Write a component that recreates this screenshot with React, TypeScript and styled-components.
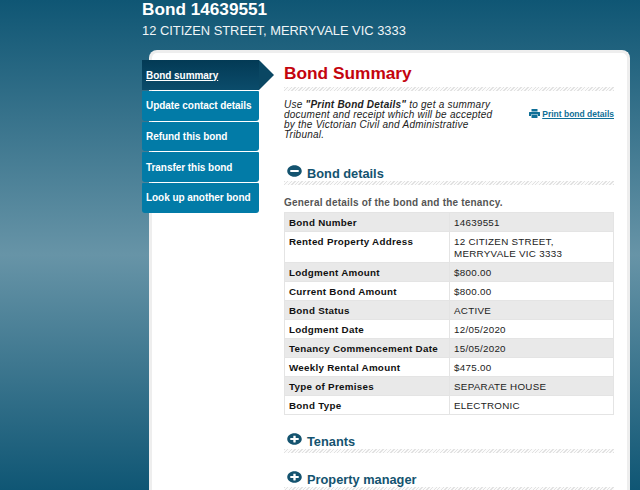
import styled, { createGlobalStyle } from 'styled-components'
import { FaMinusCircle, FaPlusCircle } from 'react-icons/fa'

const GlobalStyle = createGlobalStyle`
  html, body {
    margin: 0;
    height: 490px;
    overflow: hidden;
  }
  body {
    background: linear-gradient(#0f5674 0, #6794a7 255px, #0f5674 490px);
    font-family: "Liberation Sans", Arial, sans-serif;
  }
`

const Page = styled.div`
  width: 488px;
  height: 490px;
  margin-left: 142px;
  overflow: hidden;
`

const Header = styled.header`
  height: 50px;
  color: #fff;
`

const BondNumber = styled.h1`
  margin: 0;
  font-size: 17.2px;
  line-height: 18px;
`

const Address = styled.p`
  margin: 4px 0 0;
  font-size: 12.9px;
  line-height: 18px;
  color: #f0f5f7;
`

const Card = styled.div`
  display: flex;
  align-items: flex-start;
  margin-left: 7px;
  min-height: 440px;
  padding: 7px 13px 0 0;
  background: #fff;
  border: 3px solid #eeeeee;
  border-bottom: 0;
  border-radius: 8px 8px 0 0;
`

const Sidebar = styled.nav`
  flex: none;
  display: flex;
  flex-direction: column;
  gap: 1px;
  width: 117px;
  margin-left: -10px;
  margin-right: 25px;
`

const NavItem = styled.a<{ $active?: boolean }>`
  position: relative;
  display: flex;
  align-items: center;
  height: ${(p) => (p.$active ? '30px' : '29.7px')};
  padding-left: 4px;
  font-size: 10px;
  letter-spacing: -0.05px;
  font-weight: bold;
  white-space: nowrap;
  color: #fff;
  border-radius: ${(p) => (p.$active ? '0' : '1px 1px 3px 3px')};
  background: ${(p) => (p.$active ? 'linear-gradient(#033a55, #0b4c6b)' : '#027ba7')};
  text-decoration: ${(p) => (p.$active ? 'underline' : 'none')};

  &::after {
    content: '';
    display: ${(p) => (p.$active ? 'block' : 'none')};
    position: absolute;
    left: 100%;
    top: 0;
    border-left: 15px solid #0a4763;
    border-top: 15px solid transparent;
    border-bottom: 15px solid transparent;
  }
`

const Main = styled.main`
  flex: 1;
  min-width: 0;
`

const Title = styled.h2`
  margin: 0;
  padding: 2px 0 3px;
  font-size: 17.3px;
  line-height: 22px;
  color: #c4040e;
`

const Rule = styled.div`
  height: 4px;
  background: repeating-linear-gradient(135deg, #e2e2e2 0 1px, #fbfbfb 1px 2.5px);
`

const Intro = styled.div`
  display: flex;
  justify-content: space-between;
  align-items: flex-start;
  height: 73px;
  padding-top: 9px;
  box-sizing: border-box;
`

const IntroText = styled.p`
  width: 214px;
  margin: 0;
  font-size: 10px;
  line-height: 10px;
  letter-spacing: 0.23px;
  font-style: italic;
  color: #222;
`

const PrintLink = styled.a`
  display: flex;
  align-items: center;
  gap: 2px;
  margin-top: 8px;
  font-size: 8.5px;
  font-weight: bold;
  line-height: 12px;
  color: #0f6f97;
  text-decoration: underline;
`

const PrintIcon = styled.svg`
  width: 11px;
  height: 9px;
  margin-top: -2px;
  fill: #0f6f97;
`

const SectionHeading = styled.h3<{ $spaced?: boolean }>`
  box-sizing: border-box;
  display: flex;
  align-items: center;
  gap: 5px;
  height: 17px;
  margin: ${(p) => (p.$spaced ? '17px' : '0')} 0 0;
  padding: 2px 0 0 3px;
  font-size: 12.8px;
  line-height: 15px;
  color: #14536f;

  svg {
    width: 15px;
    height: 12px;
    margin-top: -6px;
  }
`

const Description = styled.p`
  margin: 12px 0 3px;
  font-size: 10px;
  line-height: 12px;
  letter-spacing: 0.2px;
  font-weight: bold;
  color: #555;
`

const Table = styled.table`
  width: 100%;
  border-collapse: collapse;
  font-size: 9.8px;
  letter-spacing: 0.28px;
  line-height: 12px;
  color: #222;

  tr:nth-child(odd) {
    background: #e9e9e9;
  }
`

const Label = styled.th`
  box-sizing: border-box;
  width: 165px;
  padding: 4px 4px 2px;
  border: 1px solid #e4e4e4;
  font-weight: bold;
  text-align: left;
  vertical-align: top;
  color: #111;
`

const Value = styled.td`
  padding: 4px 4px 2px;
  border: 1px solid #e4e4e4;
  vertical-align: top;
`

const rows: [string, string[]][] = [
  ['Bond Number', ['14639551']],
  ['Rented Property Address', ['12 CITIZEN STREET,', 'MERRYVALE VIC 3333']],
  ['Lodgment Amount', ['$800.00']],
  ['Current Bond Amount', ['$800.00']],
  ['Bond Status', ['ACTIVE']],
  ['Lodgment Date', ['12/05/2020']],
  ['Tenancy Commencement Date', ['15/05/2020']],
  ['Weekly Rental Amount', ['$475.00']],
  ['Type of Premises', ['SEPARATE HOUSE']],
  ['Bond Type', ['ELECTRONIC']],
]

const navItems = ['Update contact details', 'Refund this bond', 'Transfer this bond', 'Look up another bond']

export default function App() {
  return (
    <Page>
      <GlobalStyle />
      <Header>
        <BondNumber>Bond 14639551</BondNumber>
        <Address>12 CITIZEN STREET, MERRYVALE VIC 3333</Address>
      </Header>
      <Card>
        <Sidebar>
          <NavItem $active>Bond summary</NavItem>
          {navItems.map((item) => (
            <NavItem key={item}>{item}</NavItem>
          ))}
        </Sidebar>
        <Main>
          <Title>Bond Summary</Title>
          <Rule />
          <Intro>
            <IntroText>
              Use <b>"Print Bond Details"</b> to get a summary document and receipt which will be accepted by the
              Victorian Civil and Administrative Tribunal.
            </IntroText>
            <PrintLink>
              <PrintIcon viewBox="0 0 22 18">
                <path d="M5 0h12v5H5zM1 6h20a1 1 0 0 1 1 1v7h-4v-3H4v3H0V7a1 1 0 0 1 1-1zM5 12h12v6H5z" />
              </PrintIcon>
              Print bond details
            </PrintLink>
          </Intro>
          <SectionHeading>
            <FaMinusCircle preserveAspectRatio="none" />
            Bond details
          </SectionHeading>
          <Rule />
          <Description>General details of the bond and the tenancy.</Description>
          <Table>
            <tbody>
              {rows.map(([label, lines]) => (
                <tr key={label}>
                  <Label>{label}</Label>
                  <Value>
                    {lines.map((line) => (
                      <div key={line}>{line}</div>
                    ))}
                  </Value>
                </tr>
              ))}
            </tbody>
          </Table>
          <SectionHeading $spaced>
            <FaPlusCircle preserveAspectRatio="none" />
            Tenants
          </SectionHeading>
          <Rule />
          <SectionHeading $spaced>
            <FaPlusCircle preserveAspectRatio="none" />
            Property manager
          </SectionHeading>
          <Rule />
        </Main>
      </Card>
    </Page>
  )
}
